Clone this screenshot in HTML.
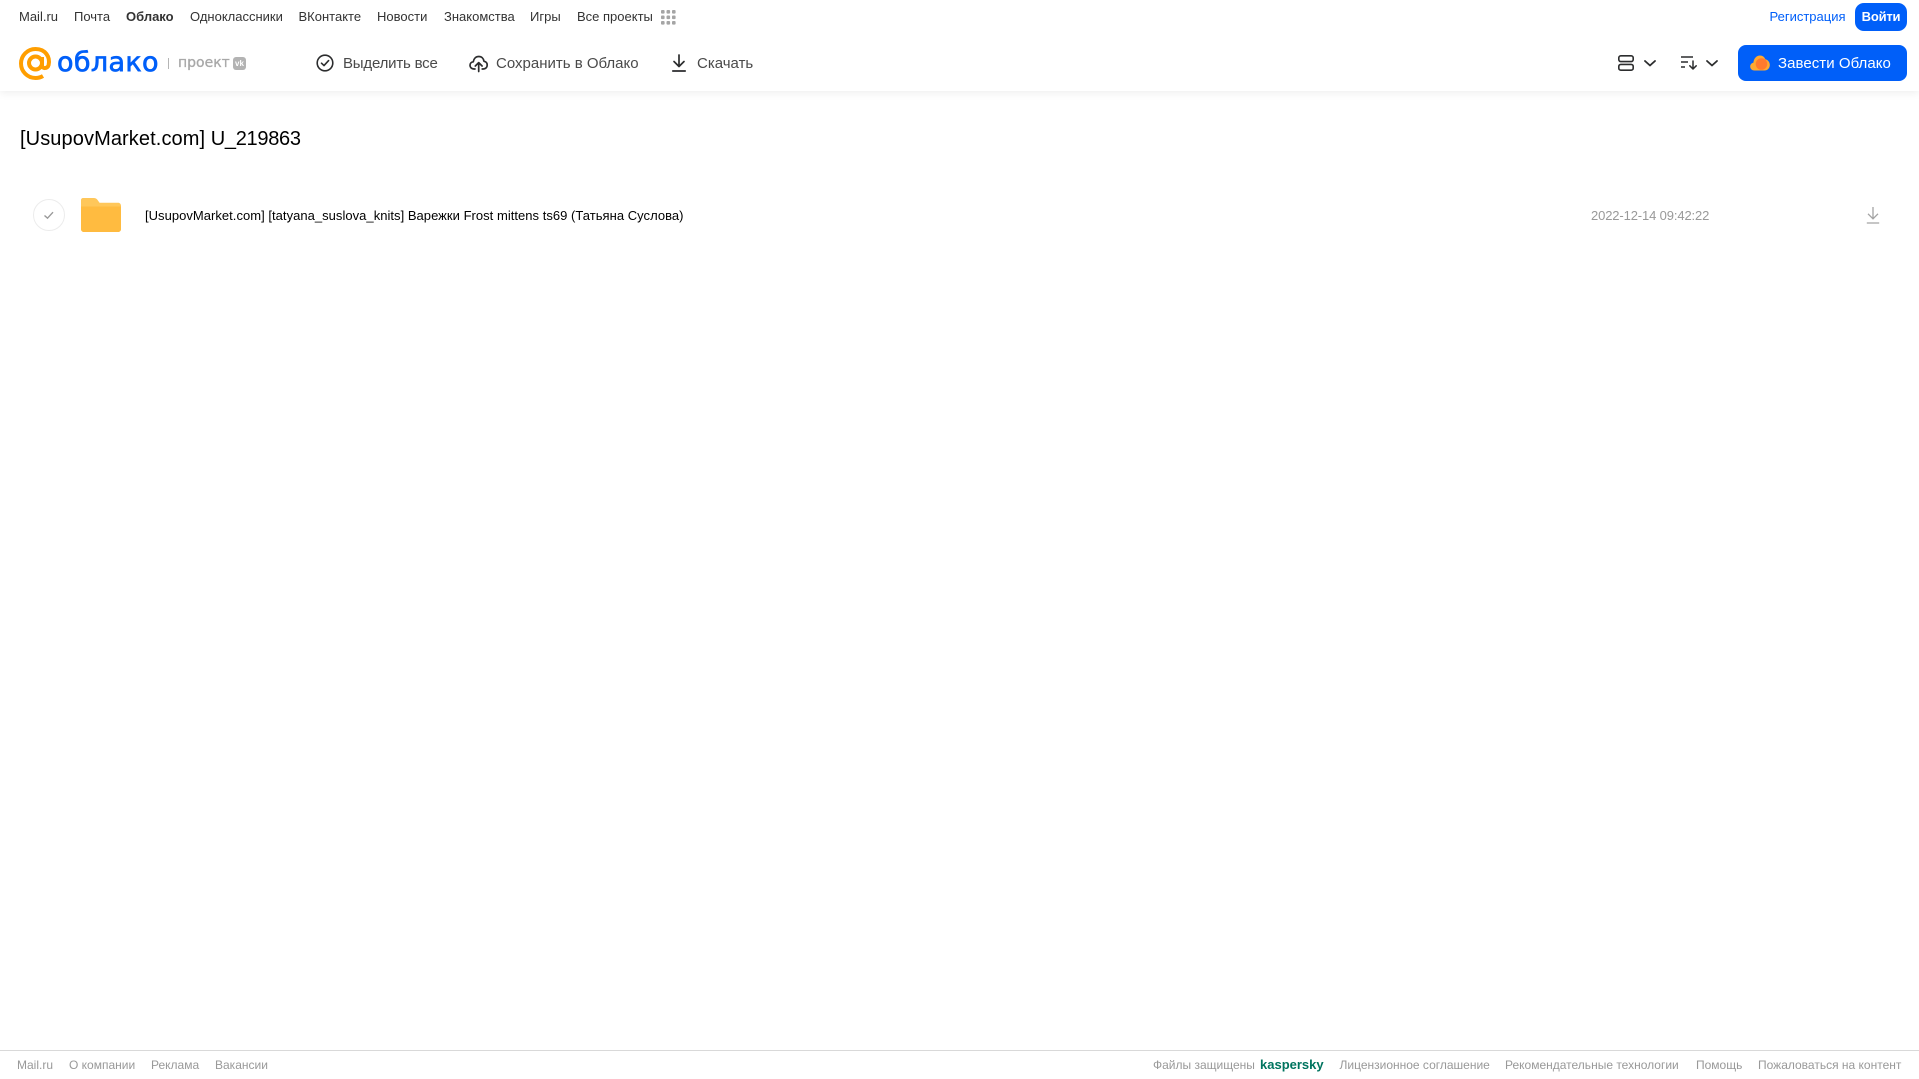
<!DOCTYPE html>
<html lang="ru"><head><meta charset="utf-8"><title>Облако</title>
<style>
html,body{margin:0;padding:0;background:#fff;width:1919px;height:1079px;overflow:hidden}
body{position:relative;font-family:"Liberation Sans",Arial,sans-serif}
.t{position:absolute;white-space:nowrap;line-height:20px;height:20px}
.n{top:7px;font-size:13px;color:#333}
.b{top:54px;font-size:15px;color:#4a4a4a}
.f{top:1055px;font-size:12px;color:#999}
svg{position:absolute;overflow:visible}
.hdr{position:absolute;left:0;top:0;width:1919px;height:91px;background:#fff;box-shadow:0 2px 8px rgba(0,0,0,.07)}
</style></head><body>
<div class="hdr"></div>
<span class="t n" style="left:19px">Mail.ru</span>
<span class="t n" style="left:74px">Почта</span>
<span class="t n" style="left:126px;font-weight:bold">Облако</span>
<span class="t n" style="left:190px">Одноклассники</span>
<span class="t n" style="left:298.500px">ВКонтакте</span>
<span class="t n" style="left:377px">Новости</span>
<span class="t n" style="left:444px">Знакомства</span>
<span class="t n" style="left:530px">Игры</span>
<span class="t n" style="left:577px">Все проекты</span>
<svg style="left:661px;top:10px" width="15" height="15" fill="#a5a5a5"><rect x="0" y="0" width="3.6" height="3.6" rx="1"/><rect x="5.5" y="0" width="3.6" height="3.6" rx="1"/><rect x="11" y="0" width="3.6" height="3.6" rx="1"/><rect x="0" y="5.5" width="3.6" height="3.6" rx="1"/><rect x="5.5" y="5.5" width="3.6" height="3.6" rx="1"/><rect x="11" y="5.5" width="3.6" height="3.6" rx="1"/><rect x="0" y="11" width="3.6" height="3.6" rx="1"/><rect x="5.5" y="11" width="3.6" height="3.6" rx="1"/><rect x="11" y="11" width="3.6" height="3.6" rx="1"/></svg>
<span class="t n" style="left:1769.500px;color:#005ff9">Регистрация</span>
<div style="position:absolute;left:1855px;top:3px;width:52px;height:28px;border-radius:9px;background:#005ff9;color:#fff;font-size:13px;font-weight:bold;letter-spacing:-.2px;line-height:28px;text-align:center">Войти</div>

<!-- logo -->
<svg style="left:19px;top:47px" width="33" height="33" viewBox="0 0 33 33" fill="none" stroke="#ff9e00" stroke-width="4"><circle cx="16.5" cy="16" r="6.5"/><path d="M23 10v8.500c0 3.500 5.600 3.500 6.600-.5 1.800-8-3.100-16-13.100-16C8.500 2 2 8.500 2 16.500S8.500 31 16.500 31c3 0 5.500-.8 7.500-2"/></svg>
<span style="position:absolute;left:57px;top:43px;font-family:'DejaVu Sans',sans-serif;font-size:27px;letter-spacing:.35px;line-height:40px;color:#005ff9;-webkit-text-stroke:.7px #005ff9;white-space:nowrap">облако</span>
<div style="position:absolute;left:168px;top:58px;width:1px;height:11px;background:#b5b5b5"></div>
<span class="t" style="left:178px;top:53px;font-family:'DejaVu Sans',sans-serif;font-size:14px;color:#a8a8a8;-webkit-text-stroke:.3px #a8a8a8">проект</span>
<div style="position:absolute;left:233px;top:57px;width:13px;height:13px;border-radius:3px;background:#b3b3b3;color:#fff;font-size:8px;font-weight:bold;line-height:13px;text-align:center">vk</div>

<!-- toolbar -->
<svg style="left:316px;top:54px" width="18" height="18" fill="none" stroke="#2c2d2e" stroke-width="1.600"><circle cx="9" cy="9" r="7.800"/><path d="M5.500 9.200l2.500 2.400 4.600-5" stroke-linecap="round" stroke-linejoin="round"/></svg>
<span class="t b" style="left:343px;letter-spacing:-.2px">Выделить все</span>
<svg style="left:469px;top:54px" width="19" height="18" fill="none" stroke="#2c2d2e" stroke-width="1.700" stroke-linecap="round" stroke-linejoin="round"><path d="M6 15H5C2.500 15 1 13.300 1 11.300 1 9.300 2.500 8 4.300 7.800 4.800 4.500 7 2.500 9.800 2.500c2.800 0 4.800 2 5.200 4.800 2 .3 3.200 1.800 3.200 3.800 0 2.200-1.600 3.900-4 3.900h-1"/><path d="M9.700 17.500V9M6.300 12l3.400-3.400 3.400 3.400"/></svg>
<span class="t b" style="left:496px">Сохранить в Облако</span>
<svg style="left:672px;top:54px" width="14" height="18" fill="none" stroke="#2c2d2e" stroke-width="1.700" stroke-linecap="round" stroke-linejoin="round"><path d="M7 1v11M2 7.500L7 12.500l5-5M.8 17h12.400"/></svg>
<span class="t b" style="left:697px">Скачать</span>

<!-- view / sort -->
<svg style="left:1618px;top:55px" width="16" height="16" fill="none" stroke="#2c2d2e" stroke-width="1.600"><rect x=".8" y=".8" width="14.400" height="5.800" rx="2"/><rect x=".8" y="9.400" width="14.400" height="5.800" rx="2"/></svg>
<svg style="left:1644px;top:60px" width="12" height="7" fill="none" stroke="#2c2d2e" stroke-width="1.800" stroke-linecap="round" stroke-linejoin="round"><path d="M1 1l5 4.500L11 1"/></svg>
<svg style="left:1681px;top:56px" width="16" height="14" fill="none" stroke="#2c2d2e" stroke-width="1.500"><path d="M0 1h12M0 6h7M0 11h4"/><path d="M12 5v8M8.800 9.800L12 13l3.200-3.200" stroke-linecap="round" stroke-linejoin="round"/></svg>
<svg style="left:1706px;top:60px" width="12" height="7" fill="none" stroke="#2c2d2e" stroke-width="1.800" stroke-linecap="round" stroke-linejoin="round"><path d="M1 1l5 4.500L11 1"/></svg>

<div style="position:absolute;left:1738px;top:45px;width:169px;height:36px;border-radius:8px;background:#005ff9"></div>
<svg style="left:1750px;top:55px" width="20" height="16"><path d="M4.500 15.500C2 15.500 .2 13.800 .2 11.500.2 9.500 1.600 8 3.400 7.600 3.800 3.500 6.500.500 10 .500c2.500 0 4.500 1.500 5.300 3.800 2.500.5 4.500 2.800 4.500 5.700 0 3.200-2.400 5.500-5.300 5.500z" fill="#ffa930"/><circle cx="11.500" cy="9" r="5.800" fill="#ff7a2e"/></svg>
<span class="t" style="left:1778px;top:54px;font-size:15px;color:#fff;letter-spacing:.05px">Завести Облако</span>

<!-- title -->
<span class="t" style="left:20px;top:127px;font-size:20px;line-height:24px;height:24px;color:#000"><span style="letter-spacing:.1px">[UsupovMarket.com]</span> <span style="letter-spacing:-.3px">U_219863</span></span>

<!-- row -->
<svg style="left:33px;top:199px" width="32" height="32" fill="none"><circle cx="16" cy="16" r="15.500" stroke="#ececec"/><path d="M11.500 16.500l3 2.700 5.500-6" stroke="#999" stroke-width="1.400"/></svg>
<svg style="left:81px;top:198px" width="40" height="34" viewBox="0 0 41 34" preserveAspectRatio="none"><path d="M2 0h11c2 0 3 .8 4 2l2 2.800H38c1.700 0 3 1.300 3 3V31c0 1.700-1.300 3-3 3H3c-1.700 0-3-1.300-3-3V2c0-1.100.9-2 2-2z" fill="#ffc75a"/><path d="M0 8.500h41V31c0 1.700-1.300 3-3 3H3c-1.700 0-3-1.300-3-3z" fill="#ffbb40"/></svg>
<span class="t" style="left:145px;top:206px;font-size:13px;color:#000;letter-spacing:.03px">[UsupovMarket.com] [tatyana_suslova_knits] Варежки Frost mittens ts69 (Татьяна Суслова)</span>
<span class="t" style="left:1591px;top:206px;font-size:13px;color:#999;letter-spacing:-.13px">2022-12-14 09:42:22</span>
<svg style="left:1866px;top:207px" width="14" height="17" fill="none" stroke="#a3a3a3" stroke-width="1.300"><path d="M7 0v11.500M2 6.800l5 5 5-5M.8 16h12.400"/></svg>

<!-- footer -->
<div style="position:absolute;left:0;top:1050px;width:1919px;height:1px;background:#d9d9d9"></div>
<span class="t f" style="left:17px">Mail.ru</span>
<span class="t f" style="left:69px">О компании</span>
<span class="t f" style="left:151px">Реклама</span>
<span class="t f" style="left:215px">Вакансии</span>
<span class="t f" style="left:1153px">Файлы защищены</span>
<span class="t f" style="left:1260px;color:#00745f;font-weight:bold;font-size:13px">kaspersky</span>
<span class="t f" style="left:1339.500px">Лицензионное соглашение</span>
<span class="t f" style="left:1505px">Рекомендательные технологии</span>
<span class="t f" style="left:1696px">Помощь</span>
<span class="t f" style="left:1758px">Пожаловаться на контент</span>
</body></html>
